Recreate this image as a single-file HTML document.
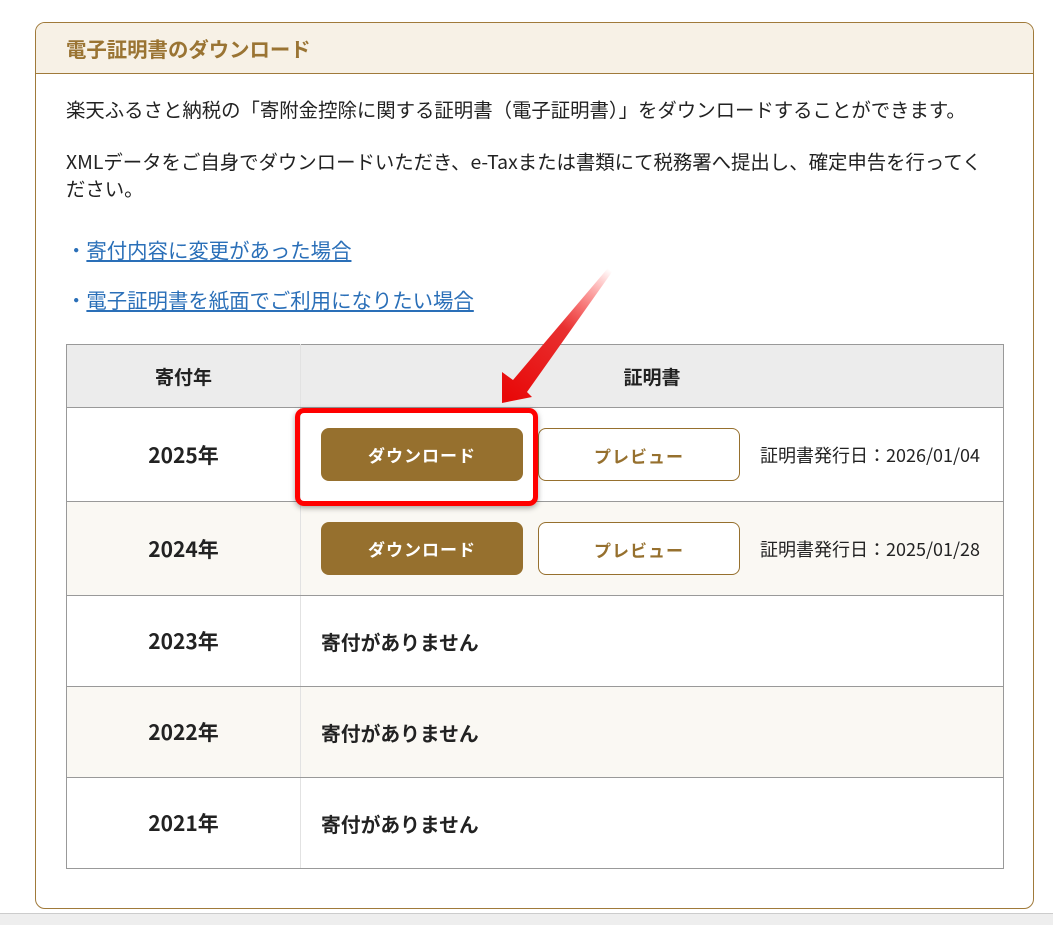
<!DOCTYPE html>
<html><head><meta charset="utf-8"><style>
body{margin:0;width:1053px;height:924px;background:#fff;font-family:"Noto Sans CJK JP","Liberation Sans",sans-serif;position:relative;overflow:hidden;color:#222}
.card{position:absolute;left:35px;top:22px;width:997px;height:885px;border:1px solid #a07a3a;border-radius:10px;overflow:hidden}
.hd{height:50px;background:#f7f1e6;border-bottom:1px solid #a07a3a;color:#9a7433;font-weight:bold;font-size:20.4px;line-height:50px;padding-left:30px}
.p{position:absolute;left:30px;font-size:19.4px;line-height:27px;width:925px}
.lk{position:absolute;left:30px;font-size:20.4px;color:#2a6fb8}
.lk span{text-decoration:underline}
table{position:absolute;left:30px;top:321px;width:938px;border-collapse:collapse;font-size:19.8px;font-weight:bold}
td{border-top:1px solid #999;border-bottom:1px solid #999;padding:0}
td.y{width:233px;text-align:center;border-left:1px solid #999;border-right:1px solid #e2e2e2;font-size:21px}
td.c{border-right:1px solid #999;padding-left:20px}
tr.h td{background:#ececec;height:62px;text-align:center;padding:0;font-size:19px}
tr.alt td{background:#faf8f3}
.b{display:inline-block;width:202px;height:53px;border-radius:8px;line-height:53px;text-align:center;font-size:17px;letter-spacing:1px;vertical-align:middle;box-sizing:border-box}
.dl{background:#96702e;color:#fff}
.pv{border:1px solid #96702e;color:#96702e;background:#fff;margin-left:15px}
.dt{font-size:18px;font-weight:normal;margin-left:20px;vertical-align:middle}
.gray{position:absolute;left:0;top:913px;width:1053px;height:11px;background:#eee;border-top:1px solid #ccc}
.red{position:absolute;left:295px;top:408px;width:233px;height:88px;border:5px solid #f00;border-radius:9px;box-shadow:0 2px 6px rgba(0,0,0,.35)}
</style></head><body>
<div class="card">
<div class="hd">電子証明書のダウンロード</div>
<div class="p" style="top:72px">楽天ふるさと納税の「寄附金控除に関する証明書（電子証明書）」をダウンロードすることができます。</div>
<div class="p" style="top:124px">XMLデータをご自身でダウンロードいただき、e-Taxまたは書類にて税務署へ提出し、確定申告を行ってください。</div>
<div class="lk" style="top:211px">・<span>寄付内容に変更があった場合</span></div>
<div class="lk" style="top:261px">・<span>電子証明書を紙面でご利用になりたい場合</span></div>
<table>
<tr class="h"><td class="y" style="font-size:19px">寄付年</td><td class="c" style="padding:0;text-align:center">証明書</td></tr>
<tr><td class="y" style="height:93px">2025年</td><td class="c"><span class="b dl">ダウンロード</span><span class="b pv">プレビュー</span><span class="dt">証明書発行日：2026/01/04</span></td></tr>
<tr class="alt"><td class="y" style="height:93px">2024年</td><td class="c"><span class="b dl">ダウンロード</span><span class="b pv">プレビュー</span><span class="dt">証明書発行日：2025/01/28</span></td></tr>
<tr><td class="y" style="height:90px">2023年</td><td class="c">寄付がありません</td></tr>
<tr class="alt"><td class="y" style="height:90px">2022年</td><td class="c">寄付がありません</td></tr>
<tr><td class="y" style="height:90px">2021年</td><td class="c">寄付がありません</td></tr>
</table>
</div>
<div class="red"></div>
<svg style="position:absolute;left:0;top:0" width="1053" height="924">
<defs><linearGradient id="g" x1="610" y1="270" x2="510" y2="400" gradientUnits="userSpaceOnUse"><stop offset="0" stop-color="#f00" stop-opacity="0"/><stop offset="0.45" stop-color="#e83030"/><stop offset="1" stop-color="#e80808"/></linearGradient></defs>
<polygon points="608,268 612,272 527,392 532,397 502,403 502,372 513,380" fill="url(#g)"/>
</svg>
<div class="gray"></div>
</body></html>
